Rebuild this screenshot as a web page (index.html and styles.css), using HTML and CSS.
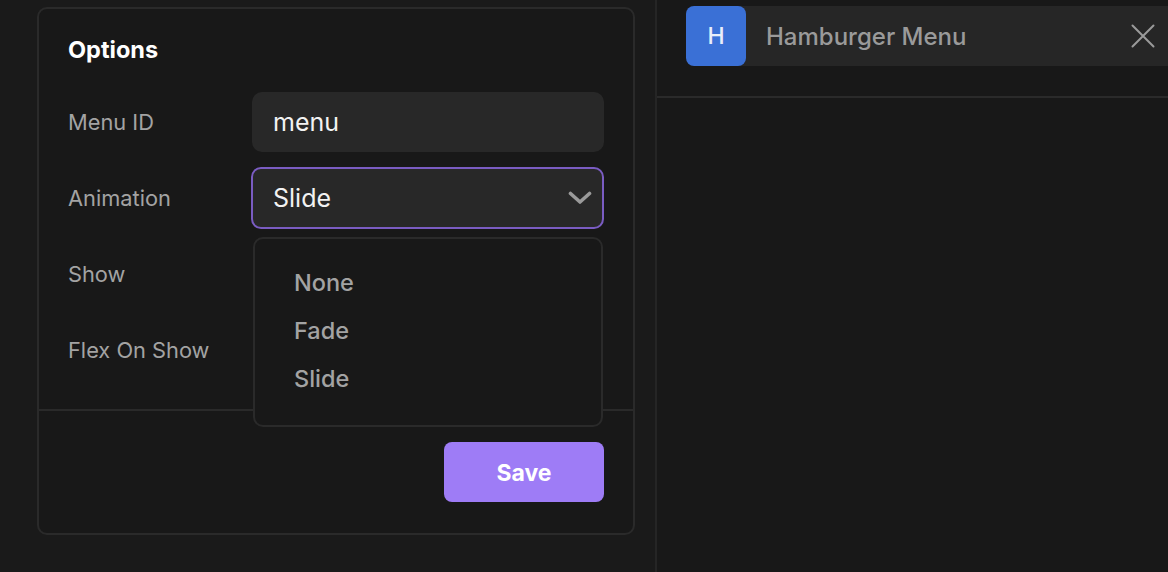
FILE: index.html
```html
<!DOCTYPE html>
<html>
<head>
<meta charset="utf-8">
<link rel="stylesheet" href="styles.css">
</head>
<body>
<div class="page">
  <div class="left">
    <div class="card">
      <div class="card-body">
        <h2 class="title">Options</h2>
        <div class="rows">
          <div class="row">
            <div class="label">Menu ID</div>
            <div class="input">menu</div>
          </div>
          <div class="row">
            <div class="label">Animation</div>
            <div class="select-wrap">
              <div class="select">
                <span>Slide</span>
                <svg class="chev" width="24" height="14" viewBox="0 0 24 14"><path d="M2.5 2.5 L12 11 L21.5 2.5" fill="none" stroke="#9a9a9a" stroke-width="3.6" stroke-linecap="round" stroke-linejoin="round"/></svg>
              </div>
              <div class="dropdown">
                <div class="opt">None</div>
                <div class="opt">Fade</div>
                <div class="opt">Slide</div>
              </div>
            </div>
          </div>
          <div class="row">
            <div class="label">Show</div>
          </div>
          <div class="row">
            <div class="label">Flex On Show</div>
          </div>
        </div>
      </div>
      <div class="card-foot">
        <button class="save">Save</button>
      </div>
    </div>
  </div>
  <div class="right">
    <div class="head">
      <div class="badge">H</div>
      <div class="bar">
        <span class="bar-title">Hamburger Menu</span>
        <svg class="close" width="24" height="24" viewBox="0 0 24 24"><path d="M1.5 1.5 L22.5 22.5 M22.5 1.5 L1.5 22.5" stroke="#9a9a9a" stroke-width="2" stroke-linecap="round"/></svg>
      </div>
    </div>
  </div>
</div>
</body>
</html>
```
FILE: styles.css
```css
* { box-sizing: border-box; }
html, body {
  margin: 0;
  height: 100%;
  background: #1a1a1a;
  font-family: Inter, "Noto Sans", sans-serif;
}
.page {
  display: flex;
  height: 572px;
  overflow: hidden;
}
.left {
  width: 655px;
  padding: 7px 20px 0 37px;
  flex: none;
}
.card {
  width: 598px;
  height: 528px;
  background: #181818;
  border: 2px solid #2a2a2a;
  border-radius: 10px;
  display: flex;
  flex-direction: column;
}
.card-body {
  padding: 27px 29px 29px 29px;
  border-bottom: 2px solid #2a2a2a;
}
.title {
  margin: 0;
  color: #ffffff;
  font-size: 23.5px;
  font-weight: 700;
  line-height: 28px;
}
.rows {
  margin-top: 27px;
  display: flex;
  flex-direction: column;
  gap: 15px;
}
.row {
  display: flex;
  align-items: center;
  height: 61px;
}
.label {
  width: 184px;
  color: #a3a3a3;
  font-size: 21.8px;
  flex: none;
}
.input {
  width: 352px;
  height: 60px;
  background: #282828;
  border-radius: 10px;
  color: #f2f2f2;
  font-size: 25px;
  padding-left: 21px;
  display: flex;
  align-items: center;
}
.select-wrap {
  position: relative;
  width: 354px;
  margin-left: -1px;
}
.select {
  height: 62px;
  background: #282828;
  border: 2px solid #7a5cc2;
  border-radius: 10px;
  color: #f2f2f2;
  font-size: 25px;
  padding: 0 10px 0 20px;
  display: flex;
  align-items: center;
  justify-content: space-between;
}
.dropdown {
  position: absolute;
  left: 2px;
  top: 70px;
  width: 350px;
  background: #181818;
  border: 2px solid #2a2a2a;
  border-radius: 10px;
  padding: 20px 0 22px;
  z-index: 5;
}
.opt {
  height: 48px;
  display: flex;
  align-items: center;
  padding-left: 39px;
  color: #a3a3a3;
  font-size: 23.5px;
  font-weight: 500;
}
.card-foot {
  flex: 1;
  display: flex;
  justify-content: flex-end;
  align-items: flex-start;
  padding: 31px 29px 0 0;
}
.save {
  width: 160px;
  height: 60px;
  border: none;
  border-radius: 8px;
  background: #9e7cf6;
  color: #ffffff;
  font-family: Inter, "Noto Sans", sans-serif;
  font-size: 23px;
  font-weight: 700;
  padding-top: 3px;
}
.right {
  flex: 1;
  background: #181818;
  border-left: 2px solid #252525;
  overflow: hidden;
}
.head {
  display: flex;
  padding: 6px 0 0 29px;
  height: 98px;
  border-bottom: 2px solid #2a2a2a;
  margin-right: -12px;
}
.badge {
  width: 60px;
  height: 60px;
  flex: none;
  background: #3a70d6;
  border-radius: 8px;
  color: #e8eefa;
  font-size: 23px;
  font-weight: 500;
  display: flex;
  align-items: center;
  justify-content: center;
  position: relative;
  z-index: 1;
}
.bar {
  flex: 1;
  height: 60px;
  background: #262626;
  border-radius: 0 8px 8px 0;
  margin-left: -8px;
  padding: 0 25px 0 28px;
  display: flex;
  align-items: center;
  justify-content: space-between;
}
.bar-title {
  color: #9a9a9a;
  font-size: 24px;
  font-weight: 500;
}
.close { display: block; }
```
